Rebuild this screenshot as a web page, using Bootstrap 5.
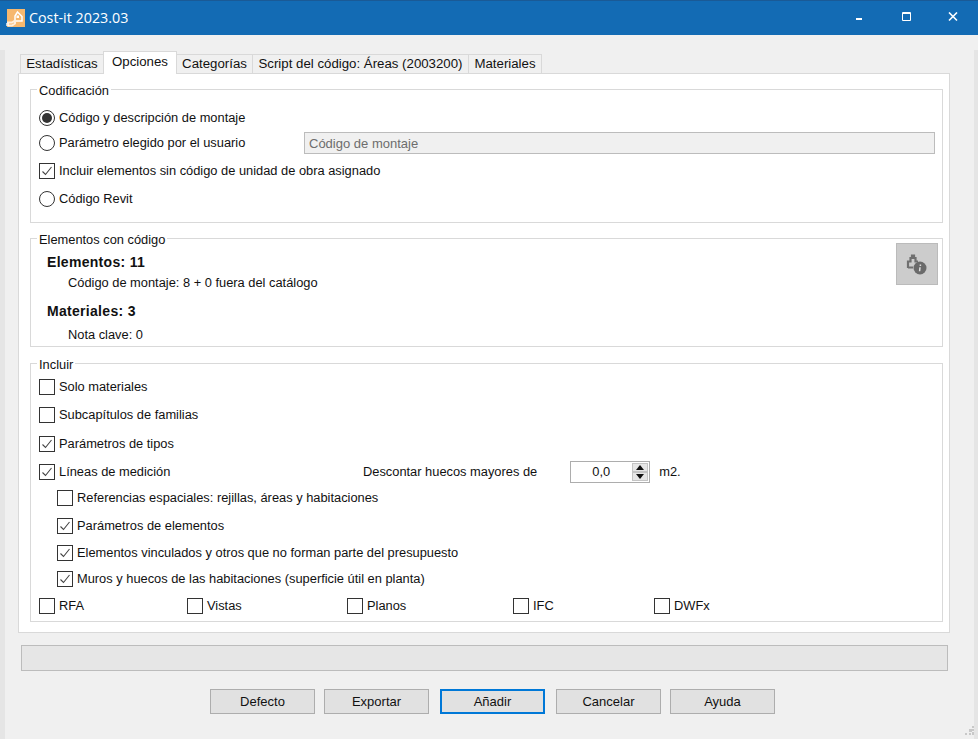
<!DOCTYPE html>
<html lang="es">
<head>
  <meta charset="UTF-8">
  <title>Cost-it 2023.03</title>
  <link href="https://cdn.jsdelivr.net/npm/bootstrap@5.3.2/dist/css/bootstrap.min.css" rel="stylesheet">
  <style>
    html, body { height: 739px; overflow: hidden; }
    body { background: #f0f0f0; color: #111; font-family: "Liberation Sans", Arial, sans-serif; font-size: 12.85px; line-height: 20px; }
    .barra-titulo { height: 35px; background: #136bb4; border-top: 1px solid #1a5a96; color: #fff; padding-right: 2px; }
    .barra-titulo .nombre { font-family: "Open Sans", sans-serif; font-size: 14.3px; }
    .icono-app { margin-left: 6px; margin-right: 4px; }
    .ctrl-ventana { width: 46px; }
    .cuerpo { height: 704px; border-left: 5px solid #e5e5e5; border-right: 4px solid #e5e5e5; border-bottom: 4px solid #e5e5e5; }
    .pestanas { margin-top: 15px; margin-left: 13px; width: 932px; padding-left: 3px; border-bottom: 0; height: 23px; align-items: flex-end; position: relative; z-index: 1; }
    .pestanas .nav-link { height: 19px; padding: 0; text-align: center; font-size: 13.25px; line-height: 18px; color: #111; background: #f0f0f0; border: 1px solid #d9d9d9; border-bottom: 0; border-radius: 0; margin: 0 0 0 -1px; }
    .pestanas .nav-link.active { height: 23px; line-height: 20px; background: #fff; color: #111; border-color: #d9d9d9; margin-bottom: -1px; }
    .tab-est { width: 84px; } .tab-opc { width: 74px; } .tab-cat { width: 77px; } .tab-scr { width: 217px; } .tab-mat { width: 74px; }
    .panel-tab { margin-left: 13px; width: 932px; height: 560px; background: #fff; border: 1px solid #d9d9d9; padding: 0 6px 0 11px; }
    .grupo { border: 1px solid #d9d9d9; padding: 0 8px; margin: 0; }
    .grupo legend { float: none; width: auto; font-size: 12.85px; line-height: 16px; margin: 0 0 0 -2px; padding: 4px 2px 0; }
    .h-cod { height: 144px; margin-top: 5px; }
    .h-ele { height: 119px; margin-top: 5px; }
    .h-inc { height: 269px; margin-top: 6px; }
    .fila { height: 20px; display: flex; align-items: center; }
    .mt-1px { margin-top: 1px; } .mt-5px { margin-top: 5px; } .mt-6px { margin-top: 6px; } .mt-7px { margin-top: 7px; } .mt-9px { margin-top: 9px; }
    .sangria { padding-left: 18px; }
    .form-check { min-height: 0; margin: 0; padding: 0; display: flex; align-items: center; }
    .form-check .form-check-input { float: none; width: 16px; height: 16px; margin: 0 4px 0 0; background-color: #fff; border: 1px solid #333; flex: none; }
    .form-check .form-check-input[type=checkbox] { border-radius: 0; }
    .form-check .form-check-input[type=radio] { border-radius: 50%; }
    .form-check .form-check-input:checked { background-color: #fff; border-color: #333; }
    .form-check .form-check-input:checked[type=checkbox] { background-size: 12px; background-image: url("data:image/svg+xml,%3csvg xmlns='http://www.w3.org/2000/svg' viewBox='0 0 12 12'%3e%3cpath fill='none' stroke='%23444' stroke-width='1.1' d='M1.5 6.500l3 3 6-7.500'/%3e%3c/svg%3e"); }
    .form-check .form-check-input:checked[type=radio] { background-size: 10px; background-image: url("data:image/svg+xml,%3csvg xmlns='http://www.w3.org/2000/svg' viewBox='0 0 10 10'%3e%3ccircle cx='5' cy='5' r='5' fill='%23333'/%3e%3c/svg%3e"); }
    .form-check-label { color: #111; }
    .campo-gris { flex: none; width: 631px; height: 22px; margin: 0 -1px 0 auto; padding: 0 4px; border: 1px solid #bcbcbc; border-radius: 0; font-size: 13px; }
    .campo-gris:disabled { background: #f0f0f0; color: #6d6d6d; }
    .titulo-neg { font-weight: 700; font-size: 14px; letter-spacing: .3px; padding-left: 8px; }
    .sub-neg { padding-left: 29px; }
    .btn-info-gris { width: 42px; height: 42px; background: #ccc; border: 1px solid #bbb; border-radius: 0; position: absolute; right: 4px; top: -5px; padding: 0; }
    .spin { width: 80px; height: 22px; border: 1px solid #adadad; margin: 0 0 0 33px; background: #fff; }
    .spin .valor { flex: 1; text-align: center; line-height: 20px; }
    .spin .flechas { width: 16px; margin: 1px; }
    .spin .flecha { flex: 1; background: #e6e6e6; border: 1px solid #c4c4c4; display: flex; align-items: center; justify-content: center; }
    .unidad { margin-left: 9px; }
    .barra-prog { margin: 12px 0 0 16px; width: 927px; height: 26px; background: #e6e6e6; border: 1px solid #bcbcbc; border-radius: 0; }
    .zona-botones { margin: 18px 0 0 205px; }
    .btn-win { width: 105px; height: 25px; padding: 0; font-size: 13px; line-height: 22px; background: #e1e1e1; color: #111; border: 1px solid #adadad; border-radius: 0; }
    .btn-win.activo { border: 2px solid #0078d7; }
    .sep-9 { margin-left: 9px; } .sep-11 { margin-left: 11px; }
    .agarre { position: absolute; right: 4px; bottom: 4px; width: 9px; height: 9px; }
    .lineas { width: 324px; }
    .col-rfa { width: 148px; } .col-vis { width: 160px; } .col-pla { width: 166px; } .col-ifc { width: 141px; }
  </style>
</head>
<body>
  <div class="barra-titulo d-flex align-items-center">
    <svg class="icono-app" width="19" height="18" viewBox="0 0 19 18">
      <rect x="1" y="0" width="18" height="18" fill="#f6b86f"/>
      <path d="M11.500 3 L16 7.500 V12 H9 V7 Z" fill="none" stroke="#fff" stroke-width="1.500"/>
      <rect x="10.500" y="6.500" width="2.500" height="2.500" fill="#fff"/>
      <path d="M1 13.500h5l3-2v3l-3 2H2" fill="none" stroke="#fdeedd" stroke-width="2"/>
      <rect x="0" y="14" width="3" height="3" fill="#fff" opacity=".7"/>
    </svg>
    <span class="nombre flex-grow-1">Cost-it 2023.03</span>
    <div class="ctrl-ventana"><svg class="d-block mx-auto" width="10" height="12" viewBox="0 0 10 12"><rect x="0" y="6" width="6" height="2" fill="#fff"/></svg></div>
    <div class="ctrl-ventana"><svg class="d-block mx-auto" width="10" height="12" viewBox="0 0 10 12"><path d="M.5 .5h8v8h-8zM0 1.500h9" fill="none" stroke="#fff"/></svg></div>
    <div class="ctrl-ventana"><svg class="d-block mx-auto" width="10" height="12" viewBox="0 0 10 12"><path d="M1 .5l8 8M9 .5l-8 8" stroke="#fff" stroke-width="1.600"/></svg></div>
  </div>

  <div class="cuerpo">
    <ul class="nav nav-tabs pestanas">
      <li class="nav-item"><a class="nav-link tab-est" href="#">Estadísticas</a></li>
      <li class="nav-item"><a class="nav-link tab-opc active" href="#">Opciones</a></li>
      <li class="nav-item"><a class="nav-link tab-cat" href="#">Categorías</a></li>
      <li class="nav-item"><a class="nav-link tab-scr" href="#">Script del código: Áreas (2003200)</a></li>
      <li class="nav-item"><a class="nav-link tab-mat" href="#">Materiales</a></li>
    </ul>

    <div class="panel-tab">
      <fieldset class="grupo h-cod">
        <legend>Codificación</legend>
        <div class="fila mt-9px"><div class="form-check"><input class="form-check-input" type="radio" name="cod" id="r1" checked><label class="form-check-label" for="r1">Código y descripción de montaje</label></div></div>
        <div class="fila mt-5px">
          <div class="form-check"><input class="form-check-input" type="radio" name="cod" id="r2"><label class="form-check-label" for="r2">Parámetro elegido por el usuario</label></div>
          <input class="form-control campo-gris" type="text" value="Código de montaje" disabled>
        </div>
        <div class="fila mt-2"><div class="form-check"><input class="form-check-input" type="checkbox" id="c1" checked><label class="form-check-label" for="c1">Incluir elementos sin código de unidad de obra asignado</label></div></div>
        <div class="fila mt-2"><div class="form-check"><input class="form-check-input" type="radio" name="cod" id="r3"><label class="form-check-label" for="r3">Código Revit</label></div></div>
      </fieldset>

      <fieldset class="grupo h-ele position-relative">
        <legend>Elementos con código</legend>
        <div class="fila titulo-neg mt-1">Elementos: 11</div>
        <div class="fila sub-neg mt-1px">Código de montaje: 8 + 0 fuera del catálogo</div>
        <div class="fila titulo-neg mt-2">Materiales: 3</div>
        <div class="fila sub-neg mt-1">Nota clave: 0</div>
        <button class="btn btn-info-gris" type="button" aria-label="Información">
          <svg width="24" height="24" viewBox="0 0 24 24">
            <path d="M3 16V9.500h2.500V6H7V3.500h2V6h1.500v3.500H13M3 15.500h5" fill="none" stroke="#6f6f6f" stroke-width="2.200"/>
            <circle cx="15" cy="16" r="6.500" fill="#6a6a6a"/>
            <path d="M15.400 12.500v1.400M15 15.200l-.4 4" stroke="#ddd" stroke-width="1.500"/>
          </svg>
        </button>
      </fieldset>

      <fieldset class="grupo h-inc">
        <legend>Incluir</legend>
        <div class="fila mt-1"><div class="form-check"><input class="form-check-input" type="checkbox" id="i1"><label class="form-check-label" for="i1">Solo materiales</label></div></div>
        <div class="fila mt-2"><div class="form-check"><input class="form-check-input" type="checkbox" id="i2"><label class="form-check-label" for="i2">Subcapítulos de familias</label></div></div>
        <div class="fila mt-9px"><div class="form-check"><input class="form-check-input" type="checkbox" id="i3" checked><label class="form-check-label" for="i3">Parámetros de tipos</label></div></div>
        <div class="fila mt-2">
          <div class="form-check lineas"><input class="form-check-input" type="checkbox" id="i4" checked><label class="form-check-label" for="i4">Líneas de medición</label></div>
          <span>Descontar huecos mayores de</span>
          <div class="spin d-flex">
            <span class="valor">0,0</span>
            <div class="flechas d-flex flex-column">
              <div class="flecha"><svg width="8" height="5" viewBox="0 0 8 5"><path d="M4 0l4 5H0z" fill="#111"/></svg></div>
              <div class="flecha"><svg width="8" height="5" viewBox="0 0 8 5"><path d="M0 0h8L4 5z" fill="#111"/></svg></div>
            </div>
          </div>
          <span class="unidad">m2.</span>
        </div>
        <div class="fila sangria mt-6px"><div class="form-check"><input class="form-check-input" type="checkbox" id="i5"><label class="form-check-label" for="i5">Referencias espaciales: rejillas, áreas y habitaciones</label></div></div>
        <div class="fila sangria mt-2"><div class="form-check"><input class="form-check-input" type="checkbox" id="i6" checked><label class="form-check-label" for="i6">Parámetros de elementos</label></div></div>
        <div class="fila sangria mt-7px"><div class="form-check"><input class="form-check-input" type="checkbox" id="i7" checked><label class="form-check-label" for="i7">Elementos vinculados y otros que no forman parte del presupuesto</label></div></div>
        <div class="fila sangria mt-6px"><div class="form-check"><input class="form-check-input" type="checkbox" id="i8" checked><label class="form-check-label" for="i8">Muros y huecos de las habitaciones (superficie útil en planta)</label></div></div>
        <div class="fila mt-7px">
          <div class="form-check col-rfa"><input class="form-check-input" type="checkbox" id="i9"><label class="form-check-label" for="i9">RFA</label></div>
          <div class="form-check col-vis"><input class="form-check-input" type="checkbox" id="i10"><label class="form-check-label" for="i10">Vistas</label></div>
          <div class="form-check col-pla"><input class="form-check-input" type="checkbox" id="i11"><label class="form-check-label" for="i11">Planos</label></div>
          <div class="form-check col-ifc"><input class="form-check-input" type="checkbox" id="i12"><label class="form-check-label" for="i12">IFC</label></div>
          <div class="form-check"><input class="form-check-input" type="checkbox" id="i13"><label class="form-check-label" for="i13">DWFx</label></div>
        </div>
      </fieldset>
    </div>

    <div class="progress barra-prog"></div>

    <div class="zona-botones d-flex">
      <button class="btn btn-win" type="button">Defecto</button>
      <button class="btn btn-win sep-9" type="button">Exportar</button>
      <button class="btn btn-win activo sep-11" type="button">Añadir</button>
      <button class="btn btn-win sep-11" type="button">Cancelar</button>
      <button class="btn btn-win sep-9" type="button">Ayuda</button>
    </div>
  </div>

  <svg class="agarre" viewBox="0 0 9 9"><path d="M7 0h2v2H7zM4 3h3v3H4zM7 3h2v2H7zM7 6h2v3H7zM4 7h2v2H4zM0 7h2v2H0z" fill="#c8c8c8"/></svg>
</body>
</html>
